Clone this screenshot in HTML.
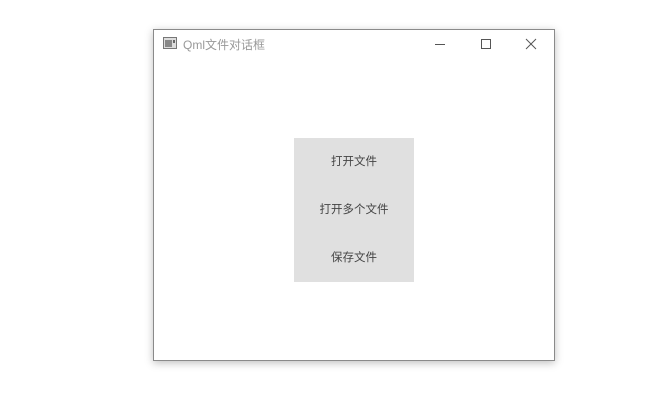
<!DOCTYPE html>
<html><head><meta charset="utf-8"><style>
body{margin:0;width:655px;height:405px;background:#fff;position:relative;overflow:hidden;font-family:"Liberation Sans","Noto Sans CJK SC",sans-serif}
.win{position:absolute;left:153px;top:29px;width:400px;height:330px;border:1px solid #8a8a8a;background:#fff;box-shadow:0 2px 8px rgba(0,0,0,.25)}
.title{position:absolute;left:29px;top:6px;font-size:12px;color:#999}
.btns{position:absolute;left:140px;top:108px;width:120px;background:#e0e0e0}
.b{height:48px;line-height:49px;text-align:center;font-size:11.5px;color:#444}
</style></head><body>
<div class="win">
<svg style="position:absolute;left:9px;top:7px" width="14" height="12"><rect x="0.5" y="0.5" width="13" height="11" fill="#ddd" stroke="#777"/><rect x="2" y="3" width="7" height="7" fill="#888"/><rect x="10" y="3" width="2" height="3" fill="#666"/></svg>
<div class="title">Qml文件对话框</div>
<svg style="position:absolute;left:280px;top:7px" width="110" height="14" stroke="#555" fill="none" stroke-width="1"><line x1="1" y1="7.5" x2="11" y2="7.5"/><rect x="47.5" y="2.5" width="9" height="9"/><line x1="92" y1="2" x2="102" y2="12"/><line x1="102" y1="2" x2="92" y2="12"/></svg>
<div class="btns"><div class="b">打开文件</div><div class="b">打开多个文件</div><div class="b">保存文件</div></div>
</div>
</body></html>
